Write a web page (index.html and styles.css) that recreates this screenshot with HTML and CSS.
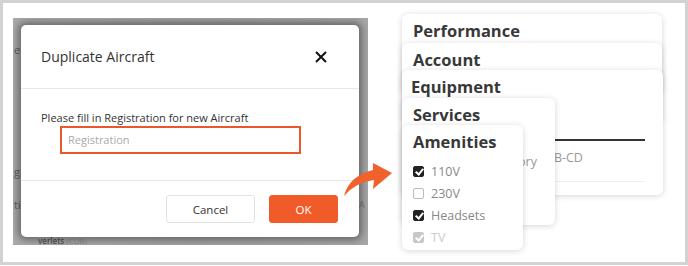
FILE: index.html
```html
<!DOCTYPE html>
<html>
<head>
<meta charset="utf-8">
<link rel="stylesheet" href="styles.css">
</head>
<body>
<div class="frame">
  <div class="shot">
    <span class="bg-text bg-1">er</span>
    <span class="bg-text bg-2">ga</span>
    <span class="bg-text bg-3">ti</span>
    <span class="bg-text bg-4">A</span>
    <span class="bg-text bg-5">verlets <i>(CUB)</i></span>
    <div class="modal">
      <div class="m-head">
        <span class="m-title">Duplicate Aircraft</span>
        <svg class="m-close" width="12" height="12" viewBox="0 0 12 12"><path d="M1 1L11 11M11 1L1 11" stroke="#111" stroke-width="2" fill="none"/></svg>
      </div>
      <div class="m-body">
        <div class="m-label">Please fill in Registration for new Aircraft</div>
        <div class="m-input">Registration</div>
      </div>
      <div class="m-foot">
        <button class="btn btn-cancel">Cancel</button>
        <button class="btn btn-ok">OK</button>
      </div>
    </div>
  </div>

  <svg class="arrow" width="60" height="45" viewBox="0 0 60 45">
    <path d="M4 38 Q9 18 33 12 L33 5 L52 15 L33 31 L34 22 Q16 24 4 38 Z" fill="#f0612b"/>
  </svg>

  <div class="stack">
    <div class="card c-perf"><div class="c-title">Performance</div></div>
    <div class="card c-acct"><div class="c-title">Account</div></div>
    <div class="card c-equip">
      <div class="c-title eq-title">Equipment</div>
      <div class="eq-rule"></div>
      <div class="eq-row"><span class="eq-val">AB-CD</span></div>
      <div class="eq-line"></div>
    </div>
    <div class="card c-serv">
      <div class="c-title">Services</div>
      <div class="sv-row">Category</div>
    </div>
    <div class="card c-amen">
      <div class="c-title">Amenities</div>
      <ul class="checks">
        <li><span class="cb on"></span>110V</li>
        <li><span class="cb"></span>230V</li>
        <li><span class="cb on"></span>Headsets</li>
        <li class="faded"><span class="cb on"></span>TV</li>
      </ul>
    </div>
  </div>
</div>
</body>
</html>
```

FILE: styles.css
```css
* { box-sizing: border-box; }
html, body { margin: 0; padding: 0; background: #fff; }
body { font-family: "Open Sans", "Liberation Sans", sans-serif; }

.frame {
  position: relative;
  width: 688px;
  height: 265px;
  border: 3px solid #d2d2d2;
  background: #fff;
  display: flex;
  align-items: flex-start;
}

/* ---------- left: modal screenshot ---------- */
.shot {
  position: relative;
  margin-left: 10px;
  margin-top: 15px;
  width: 355px;
  height: 227px;
  padding: 7px 9px 8px 8px;
  background: linear-gradient(90deg, #a9a9a9, #a2a2a2 50%, #a6a6a6);
  overflow: hidden;
}
.bg-text {
  position: absolute;
  font-size: 11px;
  color: #5c5c5c;
  white-space: nowrap;
}
.bg-1 { left: 1px; top: 24px; }
.bg-2 { left: 1px; top: 146px; }
.bg-3 { left: 1px; top: 179px; }
.bg-4 { left: 346px; top: 180px; font-size: 9px; color: #777; }
.bg-5 { left: 25px; top: 219px; font-size: 8px; line-height: 8px; color: #555; font-weight: 600; }
.bg-5 i { font-style: normal; color: #888; font-weight: 400; }

.modal {
  position: relative;
  width: 338px;
  height: 212px;
  background: #fff;
  border-radius: 5px;
  box-shadow: 0 0 7px 3px rgba(0,0,0,.38);
  display: flex;
  flex-direction: column;
}
.m-head {
  height: 64px;
  border-bottom: 1px solid #e8e8e8;
  display: flex;
  align-items: center;
  justify-content: space-between;
  padding: 0 32px 0 20px;
}
.m-title { font-size: 14px; color: #333; }
.m-body {
  height: 91px;
  padding: 20px 0 0 20px;
}
.m-label { font-size: 11px; line-height: 17px; color: #333; }
.m-input {
  margin-left: 19px;
  width: 241px;
  height: 28px;
  border: 2px solid #e9572b;
  font-size: 11px;
  line-height: 24px;
  padding-left: 6px;
  color: #aaa;
}
.m-foot {
  flex: 1;
  border-top: 1px solid #e8e8e8;
  display: flex;
  justify-content: flex-end;
  align-items: flex-start;
  gap: 14px;
  padding: 14px 21px 0 0;
}
.btn {
  height: 28px;
  font-family: "Open Sans", "Liberation Sans", sans-serif;
  font-size: 11.5px;
  border-radius: 3px;
  padding: 0;
}
.btn-cancel { width: 89px; background: #fff; border: 1px solid #e2e2e2; color: #333; }
.btn-ok { width: 69px; background: #f15a29; border: 1px solid #f15a29; color: #fff; }

/* ---------- arrow ---------- */
.arrow { position: absolute; left: 337px; top: 155px; }

/* ---------- right: stacked cards ---------- */
.stack {
  position: relative;
  margin-left: 34px;
  width: 262px;
  height: 259px;
}
.card {
  position: absolute;
  left: 0;
  background: #fff;
  border-radius: 6px;
  box-shadow: 0 1px 6px rgba(0,0,0,.16);
  padding: 7px 0 0 11px;
}
.c-title {
  font-size: 16.5px;
  line-height: 20px;
  font-weight: 700;
  color: #383838;
}
.c-perf  { top: 11px; width: 260px; height: 80px; }
.c-acct  { top: 40px; width: 260px; height: 80px; }
.c-equip { top: 67px; width: 261px; height: 125px; padding-left: 9px; padding-right: 18px; }
.c-serv  { top: 95px; width: 153px; height: 127px; padding-right: 18px; }
.c-amen  { top: 122px; width: 121px; height: 125px; }

.eq-rule { height: 2px; background: #333; margin-top: 42px; }
.eq-row { height: 30px; padding-left: 135px; display: flex; align-items: center; padding-top: 2px; }
.eq-val { font-size: 12.5px; color: #999; }
.eq-line { height: 1px; background: #eee; margin-top: 10px; }

.sv-row {
  margin-top: 28px;
  text-align: right;
  font-size: 12.5px;
  color: #999;
  line-height: 18px;
}

.checks { list-style: none; margin: 8px 0 0; padding: 0; }
.checks li {
  height: 22px;
  display: flex;
  align-items: center;
  font-size: 12.5px;
  color: #888;
}
.cb {
  width: 11px;
  height: 11px;
  border: 1px solid #bbb;
  border-radius: 2px;
  margin-right: 7px;
  position: relative;
}
.cb.on { background: #222; border-color: #222; }
.cb.on::after {
  content: "";
  position: absolute;
  left: 3px;
  top: 0px;
  width: 3px;
  height: 6px;
  border: solid #fff;
  border-width: 0 2px 2px 0;
  transform: rotate(40deg);
}
.checks li.faded { color: #ccc; }
.checks li.faded .cb.on { background: #c8c8c8; border-color: #c8c8c8; }
```
